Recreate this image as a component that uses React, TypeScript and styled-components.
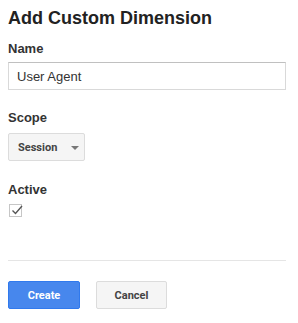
import React from "react"
import styled, { createGlobalStyle } from "styled-components"

const GlobalStyle = createGlobalStyle`
  body {
    margin: 0;
    background: #fff;
    font-family: "Liberation Sans", Arial, sans-serif;
  }
`

const Dialog = styled.div`
  padding: 8px;
  width: 298px;
  box-sizing: border-box;
`

const Title = styled.h2`
  margin: 0 0 12px;
  font-size: 18px;
  line-height: 21px;
  font-weight: bold;
  color: #222;
`

const Field = styled.div<{ $gap: number }>`
  margin-bottom: ${({ $gap }) => $gap}px;
`

const Label = styled.div<{ $space: number }>`
  font-size: 13px;
  line-height: 15px;
  font-weight: bold;
  color: #333;
  margin-bottom: ${({ $space }) => $space}px;
`

const TextInput = styled.input`
  display: block;
  width: 278px;
  height: 28px;
  box-sizing: border-box;
  border: 1px solid #d9d9d9;
  border-top-color: #c0c0c0;
  padding: 0 8px;
  font-family: "Liberation Sans", Arial, sans-serif;
  font-size: 13px;
  color: #333;
  outline: none;
`

const Select = styled.div`
  display: flex;
  align-items: center;
  width: 77px;
  height: 28px;
  box-sizing: border-box;
  padding: 0 9px;
  gap: 14px;
  background: #f5f5f5;
  border: 1px solid #dcdcdc;
  border-radius: 2px;
  font-family: Roboto, "Liberation Sans", sans-serif;
  font-size: 11px;
  font-weight: bold;
  color: #444;
`

const Arrow = styled.span`
  width: 0;
  height: 0;
  border-left: 4px solid transparent;
  border-right: 4px solid transparent;
  border-top: 4px solid #777;
  margin-top: 2px;
`

const CheckBox = styled.div`
  width: 13px;
  height: 13px;
  margin-left: 1px;
  position: relative;
  box-sizing: border-box;
  border: 1px solid #c6c6c6;
  background: #fff;
`

const CheckMark = styled.svg`
  position: absolute;
  left: 0;
  top: -2px;
`

const Divider = styled.hr`
  margin: 43px 0 20px;
  border: none;
  border-top: 1px solid #e5e5e5;
  width: 278px;
`

const Buttons = styled.div`
  display: flex;
  gap: 16px;
`

const Button = styled.button<{ $primary?: boolean }>`
  height: 28px;
  width: ${({ $primary }) => ($primary ? 72 : 71)}px;
  box-sizing: border-box;
  border-radius: 2px;
  border: 1px solid ${({ $primary }) => ($primary ? "#3079ed" : "#dcdcdc")};
  background: ${({ $primary }) => ($primary ? "#4787ed" : "#f5f5f5")};
  color: ${({ $primary }) => ($primary ? "#fff" : "#444")};
  font-family: Roboto, "Liberation Sans", sans-serif;
  font-size: 11px;
  font-weight: bold;
  padding: 0;
`

export default function App() {
  return (
    <Dialog>
      <GlobalStyle />
      <Title>Add Custom Dimension</Title>
      <Field $gap={20}>
        <Label $space={6}>Name</Label>
        <TextInput defaultValue="User Agent" />
      </Field>
      <Field $gap={21}>
        <Label $space={8}>Scope</Label>
        <Select>
          Session
          <Arrow />
        </Select>
      </Field>
      <Field $gap={0}>
        <Label $space={7}>Active</Label>
        <CheckBox>
          <CheckMark width="14" height="14" viewBox="0 0 14 14">
            <path d="M2.5 7.5 L5.5 10.5 L12 3" fill="none" stroke="#555" strokeWidth="1.4" />
          </CheckMark>
        </CheckBox>
      </Field>
      <Divider />
      <Buttons>
        <Button $primary>Create</Button>
        <Button>Cancel</Button>
      </Buttons>
    </Dialog>
  )
}
